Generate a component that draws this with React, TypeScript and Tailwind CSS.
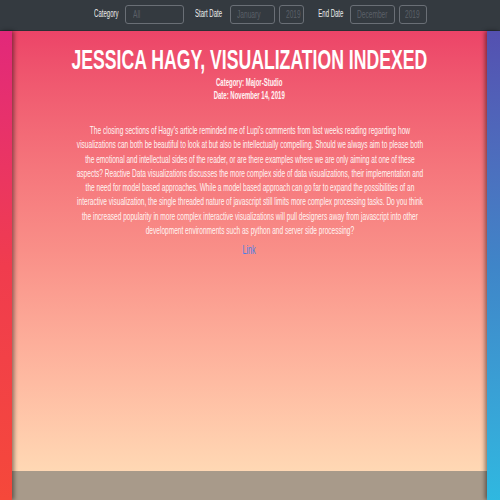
import React from "react";

const LINES = [
  "The closing sections of Hagy's article reminded me of Lupi's comments from last weeks reading regarding how",
  "visualizations can both be beautiful to look at but also be intellectually compelling. Should we always aim to please both",
  "the emotional and intellectual sides of the reader, or are there examples where we are only aiming at one of these",
  "aspects? Reactive Data visualizations discusses the more complex side of data visualizations, their implementation and",
  "the need for model based approaches. While a model based approach can go far to expand the possibilities of an",
  "interactive visualization, the single threaded nature of javascript still limits more complex processing tasks. Do you think",
  "the increased popularity in more complex interactive visualizations will pull designers away from javascript into other",
  "development environments such as python and server side processing?",
];

function Label({ children, className }: { children: React.ReactNode; className: string }) {
  return (
    <div className={"flex justify-center whitespace-nowrap text-[10px] leading-[12px] text-[#eeeeee] " + className}>
      <span className="inline-block shrink-0 scale-x-[0.6]">{children}</span>
    </div>
  );
}

function Field({ children, className }: { children: React.ReactNode; className: string }) {
  return (
    <div
      className={
        "h-[19px] border border-[#6a6f76] rounded-[3px] flex items-center overflow-hidden text-[11px] text-[#5b6068] " +
        className
      }
    >
      <span className="inline-block shrink-0 origin-left scale-x-[0.6] whitespace-nowrap">{children}</span>
    </div>
  );
}

export default function App() {
  return (
    <div className="h-[500px] w-[500px] overflow-hidden flex flex-col font-['Liberation_Sans',Arial,sans-serif]">
      <nav className="h-[31px] shrink-0 bg-[#343a40] border-b border-[#2b3035] flex items-center pl-[94px] pb-[2px]">
        <Label className="w-[24px]">Category</Label>
        <Field className="ml-[7px] w-[59px] pl-[7px]">All</Field>
        <Label className="ml-[11px] w-[28px]">Start Date</Label>
        <Field className="ml-[7px] w-[45px] pl-[6px]">January</Field>
        <Field className="ml-[4px] w-[25px] pl-[6px]">2019</Field>
        <Label className="ml-[15px] w-[24px]">End Date</Label>
        <Field className="ml-[7px] w-[45px] pl-[6px]">December</Field>
        <Field className="ml-[4px] w-[28px] pl-[5px]">2019</Field>
      </nav>
      <div className="flex flex-1 min-h-0">
        <div className="w-[12px] shrink-0 relative z-10 bg-gradient-to-b from-[#e2287a] via-[#f03c4e] to-[#f5483a] shadow-[2px_0_4px_rgba(0,0,0,0.45)]" />
        <main className="flex-1 flex flex-col min-w-0">
          <section className="flex-1 bg-gradient-to-b from-[#ec4468] via-[#f98f88] to-[#ffd8b4] pt-[15px] flex flex-col items-center">
            <div className="w-full flex justify-center whitespace-nowrap">
              <h1 className="inline-block shrink-0 scale-x-[0.63] text-[28px] leading-[28px] font-bold text-white">
                JESSICA HAGY, VISUALIZATION INDEXED
              </h1>
            </div>
            <div className="mt-[2px] w-full flex justify-center whitespace-nowrap">
              <div className="inline-block shrink-0 scale-x-[0.6] text-center text-[10px] leading-[13px] font-bold text-[#fff4f4]">
                Category: Major-Studio
                <br />
                Date: November 14, 2019
              </div>
            </div>
            <div className="mt-[21px] w-full flex justify-center whitespace-nowrap">
              <p className="inline-block shrink-0 scale-x-[0.57] text-center text-[11.5px] leading-[14.3px] text-[#fff4f2]">
                {LINES.map((l, i) => (
                  <React.Fragment key={i}>
                    {l}
                    {i < LINES.length - 1 && <br />}
                  </React.Fragment>
                ))}
              </p>
            </div>
            <div className="mt-[6px] w-full flex justify-center">
              <a className="inline-block shrink-0 scale-x-[0.6] text-[12px] leading-[14px] text-[#4a80e4]" href="#">
                Link
              </a>
            </div>
          </section>
          <footer className="h-[29px] shrink-0 bg-[#a89a8a]" />
        </main>
        <div className="w-[13px] shrink-0 relative z-10 bg-gradient-to-b from-[#5450b0] via-[#3f85c8] to-[#2fb8e0] shadow-[-2px_0_4px_rgba(0,0,0,0.45)]" />
      </div>
    </div>
  );
}
